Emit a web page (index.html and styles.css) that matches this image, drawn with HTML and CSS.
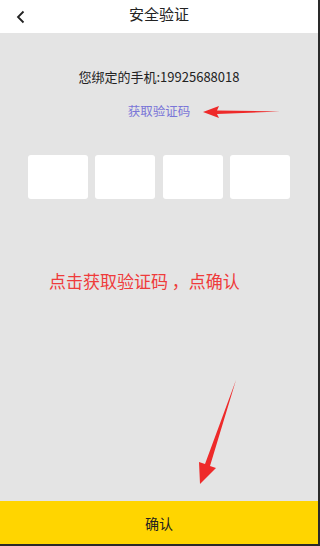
FILE: index.html
```html
<!DOCTYPE html>
<html lang="zh">
<head>
<meta charset="utf-8">
<link rel="stylesheet" href="styles.css">
</head>
<body>
<div class="app">
  <header class="topbar">
    <span class="back">
      <svg width="12" height="14" viewBox="0 0 12 14"><path d="M8.5 1.5 L3 7 L8.5 12.5" fill="none" stroke="#222" stroke-width="1.8"/></svg>
    </span>
    <h1 class="title">安全验证</h1>
  </header>
  <main class="content">
    <p class="phone">您绑定的手机:19925688018</p>
    <p class="getcode">获取验证码</p>
    <div class="codes">
      <div class="box"></div>
      <div class="box"></div>
      <div class="box"></div>
      <div class="box"></div>
    </div>
    <p class="hint">点击获取验证码 ，点确认</p>
    <svg class="arrow1" width="80" height="16" viewBox="0 0 80 16">
      <path d="M1 8 L17 2 L15 6.5 L78 7.5 L15 10 L17 14 Z" fill="#ee2a2a"/>
    </svg>
    <svg class="arrow2" width="44" height="110" viewBox="0 0 44 110">
      <path d="M40 2 L14 88 L20 90 L4 106 L3 84 L9 86 Z" fill="#ee2a2a"/>
    </svg>
  </main>
  <button class="confirm">确认</button>
</div>
</body>
</html>
```
FILE: styles.css
```css
* { box-sizing: border-box; }
html, body { margin: 0; padding: 0; }
body {
  font-family: "Noto Sans CJK SC", "Liberation Sans", sans-serif;
  background: #2a2a2a;
}
.app {
  width: 318px;
  height: 544px;
  display: flex;
  flex-direction: column;
  background: #e4e4e4;
  position: relative;
}
.topbar {
  height: 33px;
  background: #fff;
  display: flex;
  align-items: center;
  justify-content: center;
  position: relative;
}
.back {
  position: absolute;
  left: 15px;
  top: 5px;
}
.title {
  margin: 0;
  font-size: 15px;
  font-weight: normal;
  color: #222;
  line-height: 24px;
  position: relative;
  top: -3px;
}
.content {
  flex: 1;
  position: relative;
  display: flex;
  flex-direction: column;
  align-items: center;
}
.phone {
  margin: 35px 0 0;
  font-size: 13px;
  line-height: 18px;
  color: #222;
}
.getcode {
  margin: 16px 0 0;
  font-size: 12.5px;
  line-height: 18px;
  color: #7a76d8;
}
.codes {
  margin-top: 35px;
  display: flex;
  gap: 7.5px;
}
.box {
  width: 60px;
  height: 44px;
  background: #fff;
  border-radius: 3px;
}
.hint {
  align-self: flex-start;
  margin: 70px 0 0 49px;
  font-size: 17px;
  line-height: 24px;
  color: #ef3b3b;
  white-space: pre;
}
.arrow1 {
  position: absolute;
  left: 202px;
  top: 71px;
}
.arrow2 {
  position: absolute;
  left: 196px;
  top: 345px;
}
.confirm {
  height: 43px;
  border: 0;
  margin: 0;
  background: #ffd500;
  font-family: inherit;
  font-size: 14px;
  color: #222;
  padding: 0;
}
```
